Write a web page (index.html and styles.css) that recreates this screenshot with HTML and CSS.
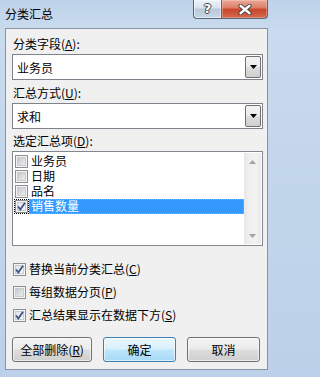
FILE: index.html
```html
<!DOCTYPE html>
<html lang="zh-CN">
<head>
<meta charset="utf-8">
<title>分类汇总</title>
<link rel="stylesheet" href="styles.css">
</head>
<body>
<div class="window">
  <div class="titlebar">
    <span class="title">分类汇总</span>
    <div class="caption-btns">
      <div class="cbtn help"><span class="qmark">?</span></div>
      <div class="cbtn close">
        <svg width="14" height="11" viewBox="0 0 14 11">
          <path d="M2.5 1.8 L11.5 9.2 M11.5 1.8 L2.5 9.2" stroke="#3b3b3b" stroke-width="4.2" stroke-linecap="round" fill="none"/>
          <path d="M2.5 1.8 L11.5 9.2 M11.5 1.8 L2.5 9.2" stroke="#ffffff" stroke-width="2.4" stroke-linecap="round" fill="none"/>
        </svg>
      </div>
    </div>
  </div>
  <div class="client">
    <div class="label">分类字段(<u>A</u>):</div>
    <div class="combo">
      <span class="combo-text">业务员</span>
      <span class="drop"><svg width="7" height="4" viewBox="0 0 7 4"><path d="M0 0 H7 L3.5 4 Z" fill="#000"/></svg></span>
    </div>
    <div class="label gap5">汇总方式(<u>U</u>):</div>
    <div class="combo">
      <span class="combo-text">求和</span>
      <span class="drop"><svg width="7" height="4" viewBox="0 0 7 4"><path d="M0 0 H7 L3.5 4 Z" fill="#000"/></svg></span>
    </div>
    <div class="label gap4">选定汇总项(<u>D</u>):</div>
    <div class="list">
      <div class="items">
        <div class="item"><span class="cb"></span><span class="item-text">业务员</span></div>
        <div class="item"><span class="cb"></span><span class="item-text">日期</span></div>
        <div class="item"><span class="cb"></span><span class="item-text">品名</span></div>
        <div class="item selected"><span class="cb checked focus"><svg width="11" height="11" viewBox="0 0 11 11"><path d="M2 5.5 L4.3 8.5 L9 1.8" stroke="#3d5189" stroke-width="1.8" fill="none"/></svg></span><span class="item-text">销售数量</span></div>
      </div>
      <div class="scrollbar">
        <div class="sb-arrow"><svg width="7" height="4" viewBox="0 0 7 4"><path d="M0 4 H7 L3.5 0 Z" fill="#a3a3a3"/></svg></div>
        <div class="sb-arrow"><svg width="7" height="4" viewBox="0 0 7 4"><path d="M0 0 H7 L3.5 4 Z" fill="#a3a3a3"/></svg></div>
      </div>
    </div>
    <div class="options">
      <div class="opt"><span class="cb checked"><svg width="11" height="11" viewBox="0 0 11 11"><path d="M2 5.5 L4.3 8.5 L9 1.8" stroke="#3d5189" stroke-width="1.8" fill="none"/></svg></span><span>替换当前分类汇总(<u>C</u>)</span></div>
      <div class="opt"><span class="cb"></span><span>每组数据分页(<u>P</u>)</span></div>
      <div class="opt"><span class="cb checked"><svg width="11" height="11" viewBox="0 0 11 11"><path d="M2 5.5 L4.3 8.5 L9 1.8" stroke="#3d5189" stroke-width="1.8" fill="none"/></svg></span><span>汇总结果显示在数据下方(<u>S</u>)</span></div>
    </div>
    <div class="buttons">
      <div class="btn wide">全部删除(<u>R</u>)</div>
      <div class="btn default">确定</div>
      <div class="btn">取消</div>
    </div>
  </div>
</div>
</body>
</html>
```

FILE: styles.css
```css
html, body {
  margin: 0;
  padding: 0;
}
body {
  width: 274px;
  height: 377px;
  overflow: hidden;
  background: linear-gradient(to bottom, #bed2e9 0%, #c9dbee 8%, #c3d6eb 40%, #bcd1e9 100%);
  font-family: "Noto Sans CJK SC", "Noto Sans", sans-serif;
  font-size: 12px;
  color: #000;
}
u {
  text-decoration: underline;
  text-underline-offset: 1px;
}
.window {
  padding: 0 6px 7px 5px;
}
.titlebar {
  height: 28px;
  display: flex;
  align-items: flex-start;
}
.title {
  padding-top: 6px;
  line-height: 16px;
  flex: 1;
}
.caption-btns {
  display: flex;
}
.cbtn {
  height: 19px;
  box-sizing: border-box;
  border: 1px solid #55677d;
  border-top: none;
  display: flex;
  align-items: center;
  justify-content: center;
}
.help {
  width: 28px;
  border-right: none;
  border-radius: 0 0 0 4px;
  background: linear-gradient(to bottom, #edf2f8 0%, #d8e2ec 45%, #b9c8d9 50%, #c9d7e6 100%);
  box-shadow: inset 0 0 0 1px rgba(255,255,255,0.5);
}
.qmark {
  font-family: "DejaVu Sans", sans-serif;
  font-weight: bold;
  font-size: 13px;
  line-height: 16px;
  color: #fff;
  text-shadow: 1px 0 0 #3a4452, -1px 0 0 #3a4452, 0 1px 0 #3a4452, 0 -1px 0 #3a4452;
}
.close {
  width: 47px;
  border-radius: 0 0 4px 0;
  background: linear-gradient(to bottom, #e9aa98 0%, #dc7c64 45%, #c8452c 50%, #d46a4e 100%);
  box-shadow: inset 0 0 0 1px rgba(255,220,210,0.35);
}
.client {
  border: 1px solid #8894a4;
  background: #f0f0f0;
  padding: 7px 4px 7px 6px;
  display: flex;
  flex-direction: column;
}
.label {
  height: 16px;
  line-height: 16px;
  padding-left: 1px;
}
.gap5 { margin-top: 5px; }
.gap4 { margin-top: 4px; }
.combo {
  margin-top: 2px;
  height: 26px;
  box-sizing: border-box;
  border: 1px solid #7e838b;
  background: #fff;
  padding: 1px;
  display: flex;
}
.combo-text {
  flex: 1;
  padding-left: 3px;
  padding-top: 2px;
  line-height: 20px;
}
.drop {
  width: 16px;
  box-sizing: border-box;
  border: 1px solid #707070;
  border-radius: 2px;
  background: linear-gradient(to bottom, #f3f3f3 0%, #ebebeb 48%, #dddddd 52%, #cfcfcf 100%);
  display: flex;
  align-items: center;
  justify-content: center;
}
.list {
  margin-top: 2px;
  height: 95px;
  box-sizing: border-box;
  border: 1px solid #828790;
  background: #fff;
  padding: 1px;
  display: flex;
}
.items {
  flex: 1;
  padding-top: 1px;
  display: flex;
  flex-direction: column;
}
.item {
  height: 15px;
  display: flex;
  align-items: center;
}
.item .cb {
  margin-left: 1px;
  margin-right: 1px;
}
.item-text {
  flex: 1;
  height: 15px;
  font-family: "Liberation Sans", "Noto Sans CJK SC", sans-serif;
  line-height: 14px;
  padding-top: 1px;
  padding-left: 2px;
  box-sizing: border-box;
}
.item.selected .item-text {
  background: #3399ff;
  color: #fff;
  border: 1px dotted #e8a040;
  line-height: 12px;
  padding-top: 1px;
  padding-left: 1px;
}
.scrollbar {
  width: 17px;
  background: linear-gradient(to right, #e6e6e6 0%, #efefef 30%, #f2f2f2 70%, #e9e9e9 100%);
  display: flex;
  flex-direction: column;
  justify-content: space-between;
}
.sb-arrow {
  height: 17px;
  display: flex;
  align-items: center;
  justify-content: center;
}
.cb {
  width: 13px;
  height: 13px;
  box-sizing: border-box;
  border: 1px solid #8e8f8f;
  background: linear-gradient(135deg, #b9bec4 0%, #dcdee1 55%, #f3f3f3 100%);
  box-shadow: inset 0 0 0 1px #f4f4f4, inset 0 0 0 2px #c9ccd0;
  display: flex;
  align-items: center;
  justify-content: center;
  flex: none;
}
.cb.checked {
  background: linear-gradient(135deg, #dcdfe3 0%, #eef0f2 55%, #f8f8f8 100%);
}
.cb.focus {
  outline: 1px dotted #000;
  outline-offset: 0px;
}
.options {
  margin-top: 15px;
  display: flex;
  flex-direction: column;
  gap: 7px;
}
.opt {
  height: 16px;
  line-height: 16px;
  display: flex;
  align-items: center;
}
.opt .cb {
  margin-left: 1px;
  margin-right: 3px;
}
.buttons {
  margin-top: 14px;
  display: flex;
  gap: 11px;
}
.btn {
  width: 73px;
  height: 25px;
  box-sizing: border-box;
  border: 1px solid #707070;
  border-radius: 3px;
  background: linear-gradient(to bottom, #f2f2f2 0%, #ebebeb 48%, #dddddd 52%, #cfcfcf 100%);
  box-shadow: inset 0 0 0 1px rgba(255,255,255,0.6);
  display: flex;
  align-items: center;
  justify-content: center;
  line-height: 16px;
}
.btn.wide {
  width: 80px;
}
.btn.default {
  border-color: #3c7fb1;
  background: linear-gradient(to bottom, #eaf6fd 0%, #d9f0fc 48%, #bee6fd 52%, #a7d9f5 100%);
}
```
